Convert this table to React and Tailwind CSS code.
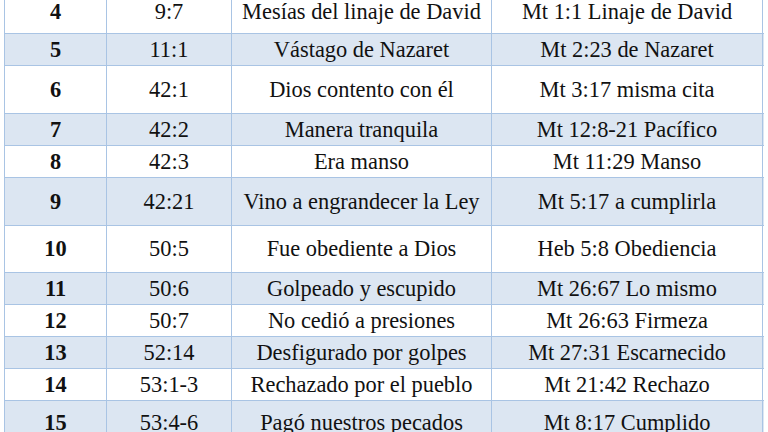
import React from "react";

const rows = [
	{ n: "4", ref: "9:7", desc: "Mesías del linaje de David", nt: "Mt 1:1 Linaje de David", h: "h-[44px]" },
	{ n: "5", ref: "11:1", desc: "Vástago de Nazaret", nt: "Mt 2:23 de Nazaret", h: "h-[32px]" },
	{ n: "6", ref: "42:1", desc: "Dios contento con él", nt: "Mt 3:17 misma cita", h: "h-[48px]" },
	{ n: "7", ref: "42:2", desc: "Manera tranquila", nt: "Mt 12:8-21 Pacífico", h: "h-[32px]" },
	{ n: "8", ref: "42:3", desc: "Era manso", nt: "Mt 11:29 Manso", h: "h-[32px]" },
	{ n: "9", ref: "42:21", desc: "Vino a engrandecer la Ley", nt: "Mt 5:17 a cumplirla", h: "h-[48px]" },
	{ n: "10", ref: "50:5", desc: "Fue obediente a Dios", nt: "Heb 5:8 Obediencia", h: "h-[47px]" },
	{ n: "11", ref: "50:6", desc: "Golpeado y escupido", nt: "Mt 26:67 Lo mismo", h: "h-[32px]" },
	{ n: "12", ref: "50:7", desc: "No cedió a presiones", nt: "Mt 26:63 Firmeza", h: "h-[32px]" },
	{ n: "13", ref: "52:14", desc: "Desfigurado por golpes", nt: "Mt 27:31 Escarnecido", h: "h-[32px]" },
	{ n: "14", ref: "53:1-3", desc: "Rechazado por el pueblo", nt: "Mt 21:42 Rechazo", h: "h-[32px]" },
	{ n: "15", ref: "53:4-6", desc: "Pagó nuestros pecados", nt: "Mt 8:17 Cumplido", h: "h-[45px]" },
];

const cell = "flex items-center justify-center pt-[1px] border-r border-[#a9c4e4] whitespace-nowrap";

export default function App() {
	return (
		<div className="w-[768px] h-[432px] overflow-hidden bg-white font-['Liberation_Serif'] text-[22.4px] leading-none text-[#111]">
			<div className="ml-[4px] mt-[-11px] w-[760px] border-l border-t border-[#a9c4e4]">
				{rows.map((r, i) => (
					<div
						key={r.n}
						className={`grid grid-cols-[102px_125px_260px_271px] border-b border-[#a9c4e4] ${r.h} ${
							i % 2 === 1 ? "bg-[#dce6f2]" : "bg-white"
						}`}
					>
						<div className={`${cell} font-bold`}>{r.n}</div>
						<div className={cell}>{r.ref}</div>
						<div className={cell}>{r.desc}</div>
						<div className={cell}>{r.nt}</div>
					</div>
				))}
			</div>
		</div>
	);
}
